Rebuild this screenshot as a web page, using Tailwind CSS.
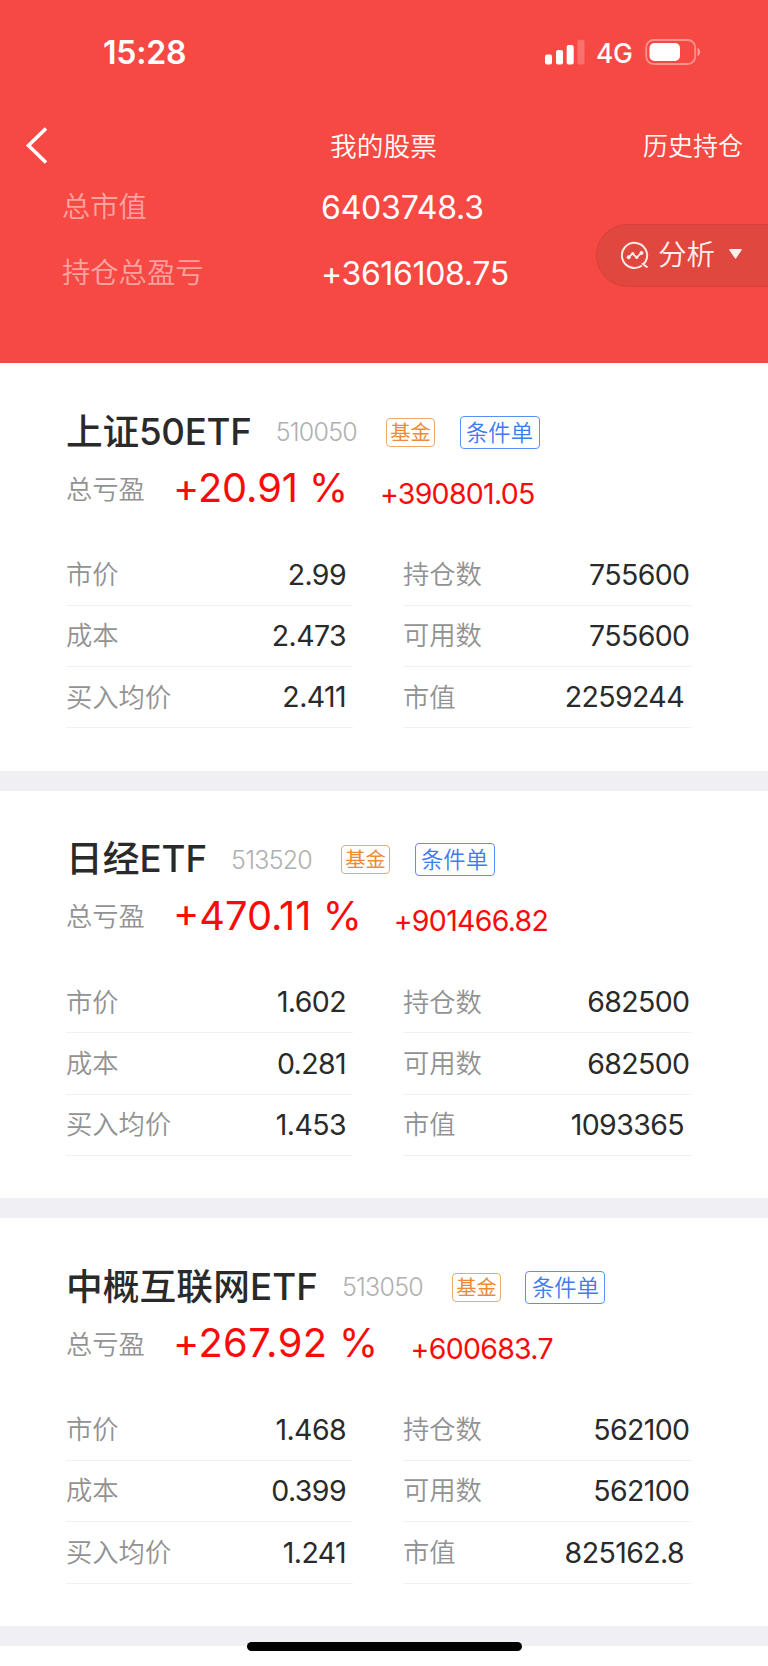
<!DOCTYPE html>
<html lang="zh-CN">
<head>
<meta charset="utf-8">
<title>我的股票</title>
<script src="https://cdn.jsdelivr.net/npm/@tailwindcss/browser@4"></script>
</head>
<body class="bg-white font-['Inter','Noto_Sans_CJK_SC',sans-serif] font-[350] w-[768px] h-[1666px] overflow-hidden relative text-[#2a2a2a]">
<header class="bg-[#f64944] h-[363px] text-white relative flex flex-col">
  <div class="h-[104px] flex items-center justify-between pl-[103px] pr-[66px]">
    <span class="mt-[2px] text-[32px] font-semibold leading-[32px] tracking-[-0.2px]">15:28</span>
    <div class="flex items-center">
      <svg class="w-10 h-[26px]" viewBox="0 0 40 26" fill="#fff"><rect x="0" y="15.5" width="7" height="10" rx="2"/><rect x="11" y="11" width="7" height="14.5" rx="2"/><rect x="21.7" y="6" width="7" height="19.5" rx="2"/><rect x="32.5" y="0.7" width="7" height="24.8" rx="2" opacity=".22"/></svg>
      <span class="ml-[11px] mt-[2px] w-[49px] text-[26.5px] font-medium leading-[30px] tracking-[-0.5px]">4G</span>
      <svg class="w-[57px] h-[26px]" viewBox="0 0 57 26" fill="none"><rect x="1.2" y="1" width="49" height="24" rx="7.5" stroke="#fff" stroke-opacity=".4" stroke-width="1.8"/><rect x="4.5" y="4" width="30.5" height="18" rx="5" fill="#fff"/><path d="M52.5 9c3.6.8 3.6 7.200 0 8z" fill="#fff" fill-opacity=".45"/></svg>
    </div>
  </div>
  <div class="h-[82px] grid grid-cols-3 items-center pl-6 pr-[25px]">
    <svg class="w-6 h-10" viewBox="0 0 24 40" fill="none" stroke="#fff" stroke-width="3.600"><path d="M22 3.500 4.500 20.500 22 37.500"/></svg>
    <h1 class="mt-[2px] text-[26.7px] text-center font-[350] whitespace-nowrap">我的股票</h1>
    <span class="mt-[4px] text-[25px] text-right whitespace-nowrap">历史持仓</span>
  </div>
  <div class="flex flex-col pl-[62px] mt-[-12px]">
    <div class="h-[66px] flex items-center"><span class="w-[259px] text-[28.3px] text-white/50">总市值</span><span class="mt-px text-[32px] font-normal tracking-[-0.2px]">6403748.3</span></div>
    <div class="h-[66px] flex items-center"><span class="w-[259px] text-[28.3px] text-white/50">持仓总盈亏</span><span class="mt-px text-[32px] font-normal tracking-[-0.35px]">+3616108.75</span></div>
  </div>
  <button class="absolute right-0 top-[224px] w-[172px] h-[63px] rounded-l-full bg-[#df473f] border border-r-0 border-[#d9403b] flex items-center pl-6 text-[#fff0ee]">
    <svg class="w-[30px] h-[30px]" viewBox="0 0 30 30" fill="none" stroke="#ffe9e6" stroke-width="2"><path d="M21 24.500A12.600 12.600 0 1 1 24.500 20.500Q23.500 22.200 22 23l4.500 3.500"/><path d="M8 16 11.500 12.500 15.500 16.500 20.500 12" stroke-width="1.800"/><g fill="#ffe9e6" stroke="none"><circle cx="7.700" cy="16.300" r="2"/><circle cx="11.800" cy="12.500" r="1.600"/><circle cx="15.800" cy="16.500" r="1.600"/><circle cx="20.500" cy="12" r="2"/></g></svg>
    <span class="ml-[7px] text-[28.500px] leading-none">分析</span>
    <svg class="ml-[14px] mt-[-3px] w-[13px] h-[10px]" viewBox="0 0 13 10" fill="#fff0ee"><path d="M1 0h11q1.300 0 .6 1.200L7.300 9q-.8 1.200-1.600 0L.4 1.200Q-.3 0 1 0z"/></svg>
  </button>
</header>
<main id="list"></main>
<div class="absolute left-[247px] top-[1642px] w-[275px] h-[9px] rounded-full bg-black"></div>
<script>
const stocks = [
  {name:'上证50ETF', nameCls:'tracking-[-0.25px]', code:'510050', pct:'+20.91 %', pctCls:'tracking-[-0.1px]', amt:'+390801.05', left:['2.99','2.473','2.411'], right:['755600','755600','2259244']},
  {name:'日经ETF', nameCls:'tracking-[0px]', code:'513520', pct:'+470.11 %', pctCls:'tracking-[0px]', amt:'+901466.82', left:['1.602','0.281','1.453'], right:['682500','682500','1093365']},
  {name:'中概互联网ETF', nameCls:'tracking-[0.1px]', code:'513050', pct:'+267.92 %', pctCls:'tracking-[0.4px]', amt:'+600683.7', left:['1.468','0.399','1.241'], right:['562100','562100','825162.8']},
];
const rows = (labels, values, side) => labels.map((l, i) => `
  <div class="h-[61.3px] border-b border-[#f1f1f3] flex items-center justify-between ${side ? (i === 2 ? 'pr-[7px]' : 'pr-[1.5px]') : 'pr-[7px]'}">
    <span class="text-[26.3px] text-[#929292]">${l}</span>
    <span class="mt-px text-[28.5px] font-normal tracking-[-0.6px]">${values[i]}</span>
  </div>`).join('');
document.getElementById('list').innerHTML = stocks.map(s => `
<section class="h-[427.6px] border-b-[20.5px] border-[#efeff4] pt-[33px]">
  <div class="h-[72px] pl-[66px] flex items-center whitespace-nowrap">
    <h2 class="text-[36.7px] font-medium leading-none ${s.nameCls}">${s.name}</h2>
    <span class="ml-[24px] mt-[2px] text-[25px] text-[#b0b0b0] tracking-[-0.75px]">${s.code}</span>
    <span class="ml-[29px] w-[49px] h-[29px] border border-[#f0a868] rounded-[4px] text-[#ec8a35] text-[20.3px] leading-[27px] text-center font-normal">基金</span>
    <span class="ml-[24.5px] w-[80px] h-[33px] border border-[#5b8ff5] rounded-[4px] text-[#3c7bf0] text-[22.3px] leading-[31px] text-center">条件单</span>
  </div>
  <div class="h-10 pl-[66px] flex items-center whitespace-nowrap">
    <span class="mt-[3px] w-[107px] text-[26.3px] text-[#929292]">总亏盈</span>
    <span class="text-[39.8px] font-normal text-[#fa0a0a] leading-none ${s.pctCls}">${s.pct}</span>
    <span class="ml-[32px] mt-3 text-[28.5px] font-normal text-[#fa0a0a] leading-none tracking-[-0.7px]">${s.amt}</span>
  </div>
  <div class="mt-[36.5px] pl-[66px] pr-[77px] grid grid-cols-[287px_288px] justify-between">
    <div>${rows(['市价','成本','买入均价'], s.left, false)}</div>
    <div>${rows(['持仓数','可用数','市值'], s.right, true)}</div>
  </div>
</section>`).join('');
</script>
</body>
</html>
